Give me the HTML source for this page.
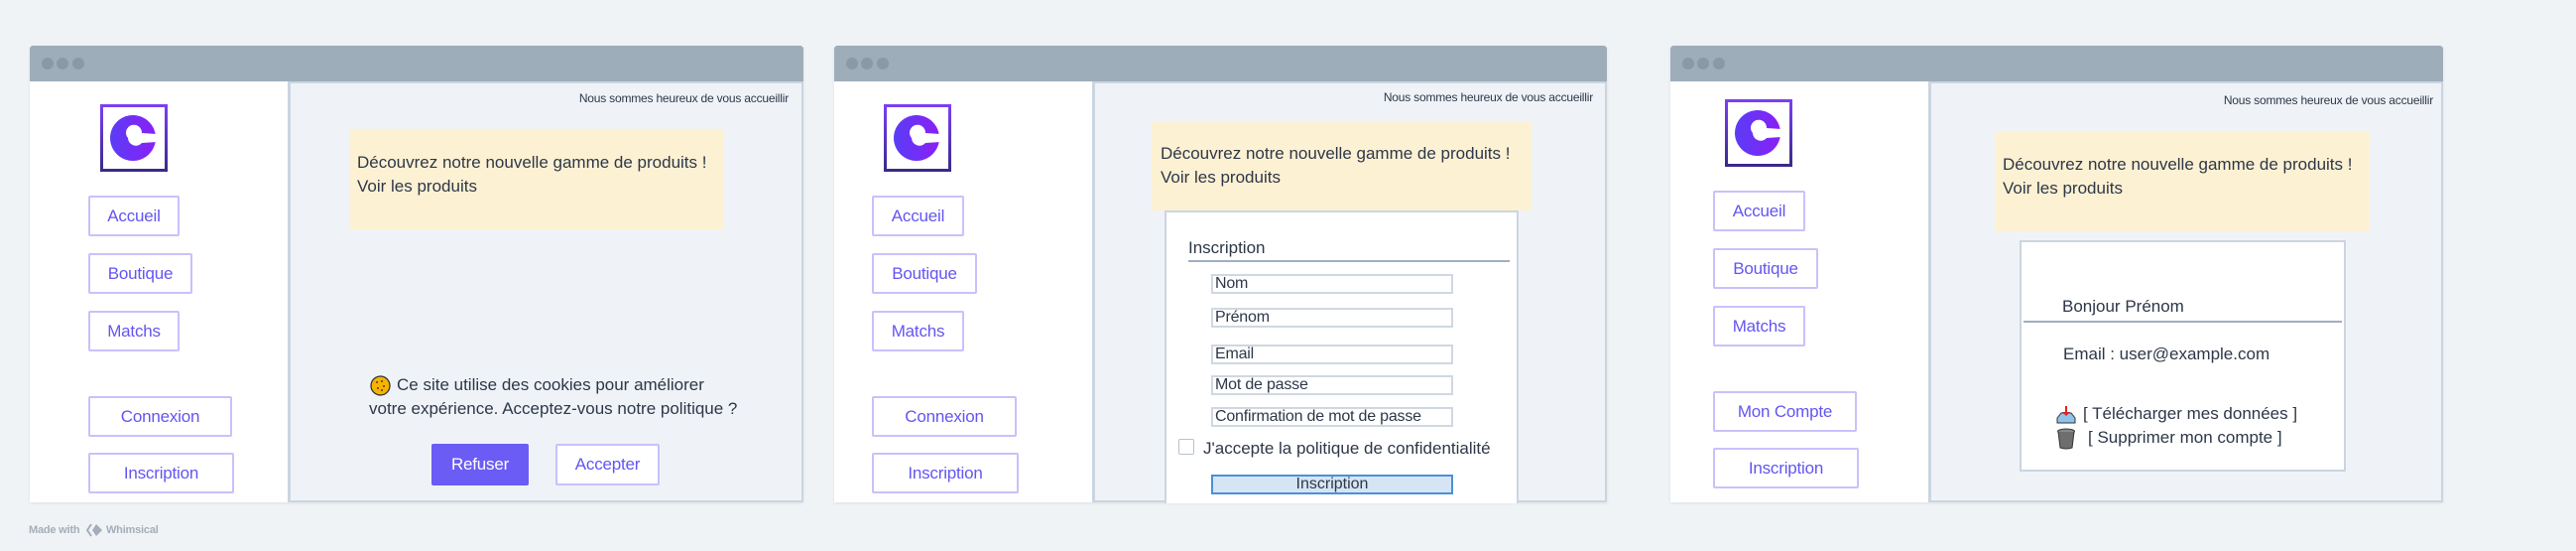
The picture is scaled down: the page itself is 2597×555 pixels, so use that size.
<!DOCTYPE html>
<html><head><meta charset="utf-8">
<style>
*{margin:0;padding:0;box-sizing:border-box}
body{width:2597px;height:555px;background:#f0f3f6;position:relative;overflow:hidden;font-family:"Liberation Sans",sans-serif;color:#2d3748}
.a{position:absolute}
.win{position:absolute;top:46px;height:460px;background:#fff;box-shadow:0 1px 3px rgba(0,0,0,.08)}
.tb{position:absolute;left:0;right:0;top:0;height:36px;background:#9eadba;border-radius:3px 3px 0 0}
.dot{position:absolute;top:12px;width:12px;height:12px;border-radius:50%;background:#8a99a6}
.main{position:absolute;top:36px;bottom:0;right:0;background:#eff3f7;border-left:3px solid #cbd5e0;border-top:2px solid #cbd5e0;border-bottom:2px solid #cbd5e0;border-right:2px solid #cbd5e0}
.btn{position:absolute;height:41px;border:2px solid #c9c1fb;border-radius:2px;background:#fff;color:#6355f0;font-size:17px;letter-spacing:-.2px;display:flex;align-items:center;justify-content:center}
.welc{position:absolute;font-size:12px;letter-spacing:-.2px;color:#2d3748;white-space:nowrap}
.yel{position:absolute;background:#fdf1d3;font-size:17px;letter-spacing:0;line-height:24px}
.t{position:absolute;white-space:nowrap;font-size:17px;letter-spacing:0}
.inp{position:absolute;left:1221px;width:244px;height:20px;border:2px solid #cfd8e2;background:#fff;font-size:16px;letter-spacing:-.2px;line-height:16px;padding-left:2px;white-space:nowrap;overflow:hidden}
</style></head><body>

<!-- WINDOW 1 -->
<div class="win" style="left:30px;width:780px">
  <div class="tb"></div>
  <div class="dot" style="left:12px"></div><div class="dot" style="left:27px"></div><div class="dot" style="left:43px"></div>
  <div class="main" style="left:260px"></div>
</div>
<div class="welc" style="right:1802px;top:92px">Nous sommes heureux de vous accueillir</div>
<svg class="a" style="left:101px;top:105px" width="68" height="68" viewBox="0 0 68 68">
<defs><linearGradient id="b1" x1="0" y1="0" x2="0" y2="1"><stop offset="0" stop-color="#7b3ff2"/><stop offset="1" stop-color="#3a2a8c"/></linearGradient>
<linearGradient id="c1" x1="0" y1="0" x2="1" y2="0"><stop offset="0" stop-color="#5a3df6"/><stop offset="1" stop-color="#8a1ff6"/></linearGradient></defs>
<rect x="1.5" y="1.5" width="65" height="65" fill="#fff" stroke="url(#b1)" stroke-width="3"/>
<circle cx="33" cy="34" r="23" fill="url(#c1)"/>
<path d="M28 34 a8 8 0 1 1 14 -5 L57 30 L57 38 L42 39 a8 8 0 0 1 -14 -5z" fill="#fff"/>
</svg>
<div class="btn" style="left:89px;top:197px;width:92px">Accueil</div>
<div class="btn" style="left:89px;top:255px;width:105px">Boutique</div>
<div class="btn" style="left:89px;top:313px;width:92px">Matchs</div>
<div class="btn" style="left:89px;top:399px;width:145px">Connexion</div>
<div class="btn" style="left:89px;top:456px;width:147px">Inscription</div>
<div class="yel" style="left:352px;top:130px;width:378px;height:101px;padding:22px 0 0 8px">Découvrez notre nouvelle gamme de produits !<br>Voir les produits</div>
<svg class="a" style="left:373px;top:378px" width="21" height="21" viewBox="0 0 21 21"><circle cx="10.5" cy="10.5" r="9.5" fill="#f4b400" stroke="#333" stroke-width="1.3"/><circle cx="7" cy="7" r="1" fill="#5a3a10"/><circle cx="12" cy="6" r="1" fill="#5a3a10"/><circle cx="14" cy="11" r="1" fill="#5a3a10"/><circle cx="8" cy="13" r="1" fill="#5a3a10"/><circle cx="12" cy="15" r="1" fill="#5a3a10"/></svg>
<div class="t" style="left:400px;top:378px">Ce site utilise des cookies pour améliorer</div>
<div class="t" style="left:372px;top:402px">votre expérience. Acceptez-vous notre politique ?</div>
<div class="btn" style="left:435px;top:447px;width:98px;height:42px;background:#6b5cf5;border-color:#6b5cf5;color:#fff">Refuser</div>
<div class="btn" style="left:560px;top:447px;width:105px;height:42px">Accepter</div>

<!-- WINDOW 2 -->
<div class="win" style="left:841px;width:779px">
  <div class="tb"></div>
  <div class="dot" style="left:12px"></div><div class="dot" style="left:27px"></div><div class="dot" style="left:43px"></div>
  <div class="main" style="left:260px"></div>
</div>
<div class="welc" style="right:991px;top:91px">Nous sommes heureux de vous accueillir</div>
<svg class="a" style="left:891px;top:105px" width="68" height="68" viewBox="0 0 68 68">
<defs><linearGradient id="b2" x1="0" y1="0" x2="0" y2="1"><stop offset="0" stop-color="#7b3ff2"/><stop offset="1" stop-color="#3a2a8c"/></linearGradient>
<linearGradient id="c2" x1="0" y1="0" x2="1" y2="0"><stop offset="0" stop-color="#5a3df6"/><stop offset="1" stop-color="#8a1ff6"/></linearGradient></defs>
<rect x="1.5" y="1.5" width="65" height="65" fill="#fff" stroke="url(#b2)" stroke-width="3"/>
<circle cx="33" cy="34" r="23" fill="url(#c2)"/>
<path d="M28 34 a8 8 0 1 1 14 -5 L57 30 L57 38 L42 39 a8 8 0 0 1 -14 -5z" fill="#fff"/>
</svg>
<div class="btn" style="left:879px;top:197px;width:93px">Accueil</div>
<div class="btn" style="left:879px;top:255px;width:106px">Boutique</div>
<div class="btn" style="left:879px;top:313px;width:93px">Matchs</div>
<div class="btn" style="left:879px;top:399px;width:146px">Connexion</div>
<div class="btn" style="left:879px;top:456px;width:148px">Inscription</div>
<div class="yel" style="left:1161px;top:123px;width:383px;height:89px;padding:20px 0 0 9px">Découvrez notre nouvelle gamme de produits !<br>Voir les produits</div>
<div class="a" style="left:1174px;top:212px;width:357px;height:295px;background:#fff;border:2px solid #cbd5e0;border-bottom:none"></div>
<div class="t" style="left:1198px;top:240px">Inscription</div>
<div class="a" style="left:1198px;top:262px;width:324px;height:2px;background:#a0aec0"></div>
<div class="inp" style="top:276px">Nom</div>
<div class="inp" style="top:310px">Prénom</div>
<div class="inp" style="top:347px">Email</div>
<div class="inp" style="top:378px">Mot de passe</div>
<div class="inp" style="top:410px">Confirmation de mot de passe</div>
<div class="a" style="left:1188px;top:442px;width:16px;height:16px;border:1.5px solid #b8c2cc;border-radius:2px;background:#fff"></div>
<div class="t" style="left:1213px;top:442px">J'accepte la politique de confidentialité</div>
<div class="a" style="left:1221px;top:478px;width:244px;height:20px;background:#d6e5f4;border:2px solid #4a90d9;font-size:16px;text-align:center;line-height:16px">Inscription</div>

<!-- WINDOW 3 -->
<div class="win" style="left:1684px;width:779px">
  <div class="tb"></div>
  <div class="dot" style="left:12px"></div><div class="dot" style="left:27px"></div><div class="dot" style="left:43px"></div>
  <div class="main" style="left:260px"></div>
</div>
<div class="welc" style="right:144px;top:94px">Nous sommes heureux de vous accueillir</div>
<svg class="a" style="left:1739px;top:100px" width="68" height="68" viewBox="0 0 68 68">
<defs><linearGradient id="b3" x1="0" y1="0" x2="0" y2="1"><stop offset="0" stop-color="#7b3ff2"/><stop offset="1" stop-color="#3a2a8c"/></linearGradient>
<linearGradient id="c3" x1="0" y1="0" x2="1" y2="0"><stop offset="0" stop-color="#5a3df6"/><stop offset="1" stop-color="#8a1ff6"/></linearGradient></defs>
<rect x="1.5" y="1.5" width="65" height="65" fill="#fff" stroke="url(#b3)" stroke-width="3"/>
<circle cx="33" cy="34" r="23" fill="url(#c3)"/>
<path d="M28 34 a8 8 0 1 1 14 -5 L57 30 L57 38 L42 39 a8 8 0 0 1 -14 -5z" fill="#fff"/>
</svg>
<div class="btn" style="left:1727px;top:192px;width:93px">Accueil</div>
<div class="btn" style="left:1727px;top:250px;width:106px">Boutique</div>
<div class="btn" style="left:1727px;top:308px;width:93px">Matchs</div>
<div class="btn" style="left:1727px;top:394px;width:145px">Mon Compte</div>
<div class="btn" style="left:1727px;top:451px;width:147px">Inscription</div>
<div class="yel" style="left:2011px;top:132px;width:378px;height:101px;padding:22px 0 0 8px">Découvrez notre nouvelle gamme de produits !<br>Voir les produits</div>
<div class="a" style="left:2036px;top:242px;width:329px;height:233px;background:#fff;border:2px solid #cbd5e0"></div>
<div class="t" style="left:2079px;top:299px">Bonjour Prénom</div>
<div class="a" style="left:2040px;top:323px;width:321px;height:2px;background:#a0aec0"></div>
<div class="t" style="left:2080px;top:347px">Email : user@example.com</div>
<svg class="a" style="left:2072px;top:408px" width="22" height="20" viewBox="0 0 22 20"><path d="M2 13 L6 8 L16 8 L20 13 L20 18 L2 18Z" fill="#8fc3ea" stroke="#333" stroke-width="1"/><rect x="10" y="1" width="2" height="8" fill="#d22"/><path d="M7 7 L11 11 L15 7Z" fill="#d22"/></svg>
<div class="t" style="left:2100px;top:407px">[ Télécharger mes données ]</div>
<svg class="a" style="left:2073px;top:431px" width="20" height="22" viewBox="0 0 20 22"><ellipse cx="10" cy="3.5" rx="8.5" ry="2.5" fill="#888" stroke="#333"/><path d="M2 4 L4 20 Q10 22 16 20 L18 4" fill="#6e6e6e" stroke="#333"/></svg>
<div class="t" style="left:2105px;top:431px">[ Supprimer mon compte ]</div>

<!-- footer -->
<div class="a" style="left:29px;top:528px;font-size:11px;font-weight:bold;color:#a3aeb9;white-space:nowrap;letter-spacing:-.2px">Made with</div>
<svg class="a" style="left:87px;top:527px" width="18" height="14" viewBox="0 0 18 14"><path d="M5 1 L1 7 L5 13" fill="none" stroke="#a3aeb9" stroke-width="2"/><path d="M10 1 L16 7 L10 13 L6 7Z" fill="#a3aeb9"/></svg>
<div class="a" style="left:107px;top:528px;font-size:11px;font-weight:bold;color:#a3aeb9;letter-spacing:-.2px">Whimsical</div>
</body></html>
